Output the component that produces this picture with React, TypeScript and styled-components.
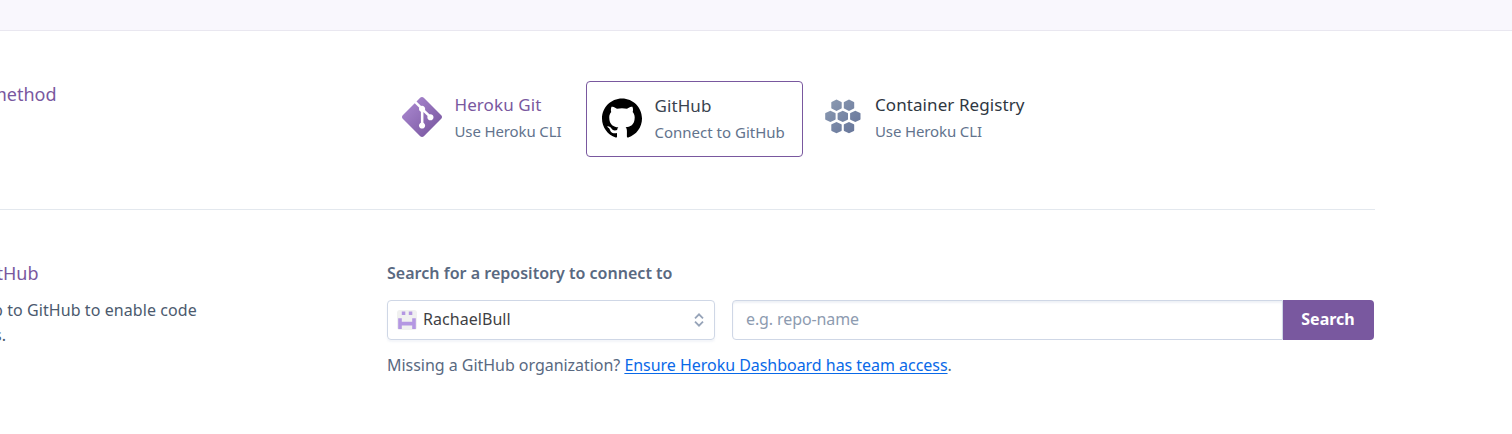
import React from "react";
import styled, { createGlobalStyle, css } from "styled-components";
import { SiGit, SiGithub } from "react-icons/si";

const GlobalStyle = createGlobalStyle`
  *, *::before, *::after { box-sizing: border-box; }
  body {
    margin: 0;
    background: #fff;
    color: #596981;
    font: 400 16px/24px "Noto Sans", sans-serif;
    overflow: hidden;
  }
`;

const Page = styled.div`
  height: 434px;
  overflow: hidden;
`;

const TopBar = styled.header`
  height: 31px;
  background: #f9f7fd;
  border-bottom: 1px solid #e9e7f0;
`;

const Section = styled.section<{ $divided?: boolean }>`
  display: grid;
  grid-template-columns: 387px 988px;
  padding-top: 50px;
  height: ${p => (p.$divided ? 179 : 224)}px;
  width: 1375px;
  border-bottom: ${p => (p.$divided ? "1px solid #e3e8ee" : "0")};
`;

const Aside = styled.div`
  overflow: hidden;
  white-space: nowrap;
`;

const Heading = styled.h2<{ $shift: number }>`
  margin: 0 0 12px ${p => -p.$shift}px;
  font-size: 18px;
  font-weight: 400;
  line-height: 26px;
  color: #79589f;
`;

const Line = styled.p<{ $shift: number }>`
  margin: 0 0 0 ${p => -p.$shift}px;
  line-height: 25px;
  letter-spacing: 0.08px;
  color: #4b5a6e;
`;

const Methods = styled.div`
  display: flex;
  align-items: flex-start;
`;

const Method = styled.div<{ $width: number; $selected?: boolean }>`
  display: flex;
  gap: 12.5px;
  width: ${p => p.$width}px;
  height: 76px;
  padding: 12px 15px;
  ${p =>
    p.$selected &&
    css`
      margin: 0 4.5px 0 -1px;
      border: 1px solid #79589f;
      border-radius: 4px;
    `}
`;

const MethodIcon = styled.div`
  width: 40px;
  height: 40px;
  flex: none;
  margin-top: 4px;
  color: #000;
  svg { display: block; }
`;

const GitIcon = styled(SiGit)`
  && { fill: url(#git-shade); }
`;

const GitHubIcon = styled(SiGithub)`
  margin-top: -0.5px;
`;

const MethodTitle = styled.div<{ $color?: string }>`
  font-size: 17px;
  line-height: 24px;
  letter-spacing: 0.08px;
  color: ${p => p.$color ?? "#3a434f"};
  white-space: nowrap;
`;

const MethodNote = styled.div<{ $tracking?: number }>`
  margin-top: 2px;
  font-size: 15px;
  line-height: 24px;
  letter-spacing: ${p => p.$tracking ?? 0}px;
  color: #62738d;
  white-space: nowrap;
`;

const Form = styled.div`
  padding-top: 1px;
`;

const Label = styled.label`
  display: block;
  font-weight: 600;
  line-height: 24px;
  letter-spacing: 0.02px;
  color: #596981;
`;

const Controls = styled.div`
  display: flex;
  width: 987px;
  height: 40px;
  margin: 15px 0 13px;
`;

const Select = styled.div`
  display: flex;
  align-items: center;
  width: 328px;
  margin-right: 17px;
  padding: 0 9px;
  border: 1px solid #cfd7e6;
  border-radius: 4px;
  box-shadow: 0 2px 2px rgba(207, 215, 230, 0.25);
  color: #3f3f44;
`;

const Owner = styled.span`
  flex: 1;
  margin-left: 6px;
  padding-bottom: 2px;
  letter-spacing: 0.05px;
`;

const RepoInput = styled.input`
  flex: 1;
  min-width: 0;
  padding: 0 13px 2px;
  border: 1px solid #cfd7e6;
  border-radius: 4px 0 0 4px;
  box-shadow: inset 0 2px 2px rgba(207, 215, 230, 0.35);
  font: inherit;
  letter-spacing: -0.1px;
  outline: 0;
  &::placeholder { color: #8d9bb0; opacity: 1; }
`;

const SearchButton = styled.button`
  width: 91px;
  padding: 0 1px 2px 0;
  border: 0;
  border-radius: 0 4px 4px 0;
  background: #79589f;
  color: #fff;
  font: inherit;
  font-weight: 700;
`;

const Help = styled.div`
  letter-spacing: -0.035px;
`;

const Link = styled.a`
  color: #0969e8;
  text-decoration: underline;
  text-underline-offset: 2px;
`;

const hexCenters = [[13.5, 8.2], [26, 8.2], [7.4, 19.4], [19.8, 19.4], [32.3, 19.4], [13.5, 30.6], [26, 30.6]];
const hexPath = hexCenters
  .map(([x, y]) => `M${x} ${y - 5.7}l4.9 2.4q.3.2.3.6v5.4q0 .4-.3.6l-4.9 2.4l-4.9-2.4q-.3-.2-.3-.6v-5.4q0-.4.3-.6z`)
  .join("");

function ContainerIcon() {
  return (
    <svg width="40" height="40" viewBox="0 0 40 40">
      <defs>
        <linearGradient id="hex-shade" gradientUnits="userSpaceOnUse" x1="4" y1="3" x2="34" y2="36">
          <stop offset="0" stopColor="#8c9bb2" />
          <stop offset="1" stopColor="#66759a" />
        </linearGradient>
      </defs>
      <path d={hexPath} fill="url(#hex-shade)" />
    </svg>
  );
}

function GitShade() {
  return (
    <linearGradient id="git-shade" x1="0" y1="0" x2="1" y2="1">
      <stop offset="0.15" stopColor="#a684cc" />
      <stop offset="0.85" stopColor="#7c5aa3" />
    </linearGradient>
  );
}

function Avatar() {
  return (
    <svg width="20" height="20" viewBox="0 0 20 20">
      <rect width="20" height="20" rx="3" fill="#f0f0f0" />
      <path
        d="M4.8 1.6h3.5V5H4.8zM11.8 1.6h3.5V5h-3.5zM1.2 8.2h3.6v3.6h10.4V8.2h3.6V19h-3.6v-3.6H4.8V19H1.2z"
        fill="#b497e2"
      />
    </svg>
  );
}

function Chevrons() {
  return (
    <svg width="12" height="16" viewBox="0 0 12 16" fill="none" stroke="#96a3b8" strokeWidth="1.8">
      <path d="M2 6.3 6 2.3l4 4M2 9.7l4 4 4-4" />
    </svg>
  );
}

export default function App() {
  return (
    <Page>
      <GlobalStyle />
      <TopBar />
      <Section $divided>
        <Aside>
          <Heading $shift={10}>method</Heading>
        </Aside>
        <Methods>
          <Method $width={200}>
            <MethodIcon>
              <svg width="0" height="0"><defs><GitShade /></defs></svg>
              <GitIcon size={40} />
            </MethodIcon>
            <div>
              <MethodTitle $color="#79589f">Heroku Git</MethodTitle>
              <MethodNote $tracking={-0.13}>Use Heroku CLI</MethodNote>
            </div>
          </Method>
          <Method $width={217} $selected>
            <MethodIcon><GitHubIcon size={40} /></MethodIcon>
            <div>
              <MethodTitle>GitHub</MethodTitle>
              <MethodNote>Connect to GitHub</MethodNote>
            </div>
          </Method>
          <Method $width={240}>
            <MethodIcon><ContainerIcon /></MethodIcon>
            <div>
              <MethodTitle $color="#2f3742">Container Registry</MethodTitle>
              <MethodNote $tracking={-0.13}>Use Heroku CLI</MethodNote>
            </div>
          </Method>
        </Methods>
      </Section>
      <Section>
        <Aside>
          <Heading $shift={3.5}>tHub</Heading>
          <Line $shift={7}>p to GitHub to enable code</Line>
          <Line $shift={6}>s.</Line>
        </Aside>
        <Form>
          <Label htmlFor="repo">Search for a repository to connect to</Label>
          <Controls>
            <Select>
              <Avatar />
              <Owner>RachaelBull</Owner>
              <Chevrons />
            </Select>
            <RepoInput id="repo" placeholder="e.g. repo-name" />
            <SearchButton>Search</SearchButton>
          </Controls>
          <Help>
            Missing a GitHub organization? <Link>Ensure Heroku Dashboard has team access</Link>.
          </Help>
        </Form>
      </Section>
    </Page>
  );
}
